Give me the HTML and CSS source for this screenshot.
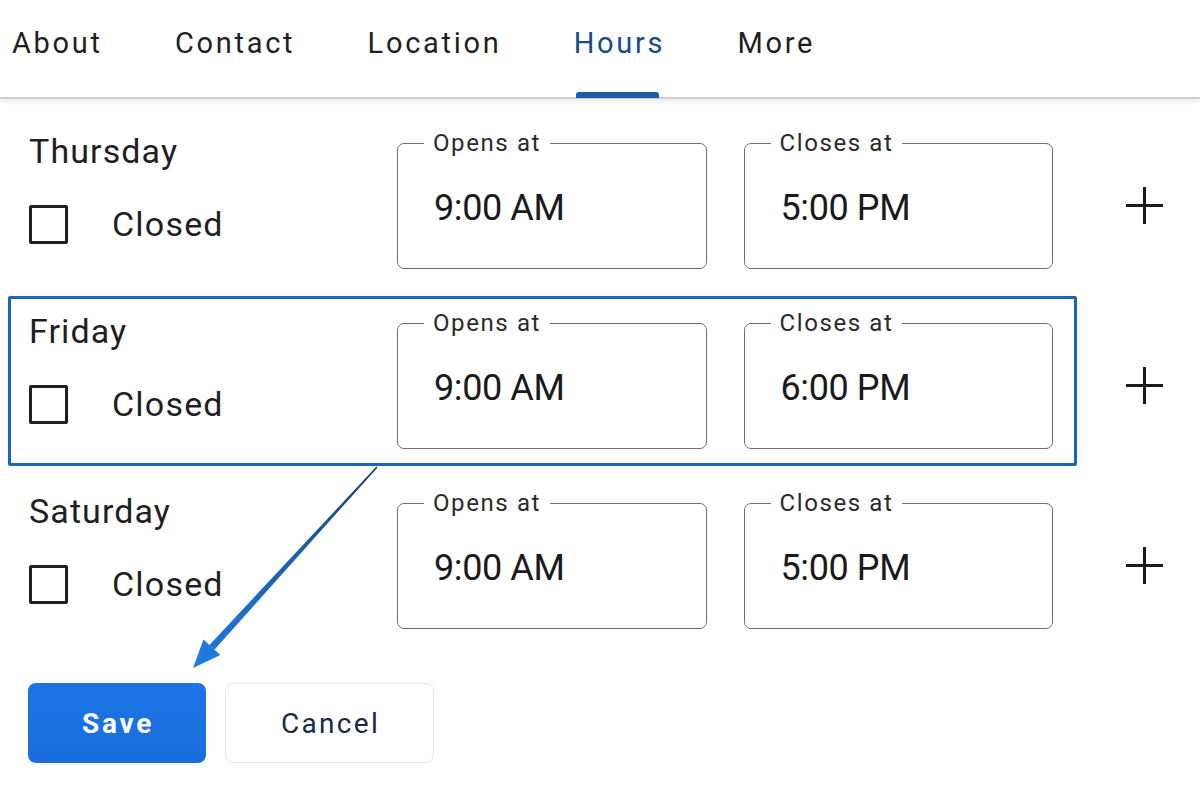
FILE: index.html
```html
<!DOCTYPE html>
<html lang="en">
<head>
<meta charset="utf-8">
<title>Hours</title>
<link rel="stylesheet" href="styles.css">
</head>
<body>
<div class="page">
  <nav class="tabs">
    <a class="tab">About</a>
    <a class="tab">Contact</a>
    <a class="tab">Location</a>
    <a class="tab active">Hours</a>
    <a class="tab">More</a>
  </nav>

  <div class="days">
    <div class="day-row">
      <div class="day-box">
        <div class="day-left">
          <div class="day-name">Thursday</div>
          <label class="closed"><span class="checkbox"></span><span class="closed-text">Closed</span></label>
        </div>
        <fieldset class="time-field"><legend>Opens at</legend><div class="time-value">9:00 AM</div></fieldset>
        <fieldset class="time-field"><legend>Closes at</legend><div class="time-value">5:00 PM</div></fieldset>
      </div>
      <span class="add"></span>
    </div>

    <div class="day-row">
      <div class="day-box highlighted">
        <div class="day-left">
          <div class="day-name">Friday</div>
          <label class="closed"><span class="checkbox"></span><span class="closed-text">Closed</span></label>
        </div>
        <fieldset class="time-field"><legend>Opens at</legend><div class="time-value">9:00 AM</div></fieldset>
        <fieldset class="time-field"><legend>Closes at</legend><div class="time-value">6:00 PM</div></fieldset>
      </div>
      <span class="add"></span>
    </div>

    <div class="day-row">
      <div class="day-box">
        <div class="day-left">
          <div class="day-name">Saturday</div>
          <label class="closed"><span class="checkbox"></span><span class="closed-text">Closed</span></label>
        </div>
        <fieldset class="time-field"><legend>Opens at</legend><div class="time-value">9:00 AM</div></fieldset>
        <fieldset class="time-field"><legend>Closes at</legend><div class="time-value">5:00 PM</div></fieldset>
      </div>
      <span class="add"></span>
    </div>
  </div>

  <div class="actions">
    <button class="btn btn-save">Save</button>
    <button class="btn btn-cancel">Cancel</button>
  </div>

  <svg class="arrow" width="1200" height="800" viewBox="0 0 1200 800">
    <defs>
      <linearGradient id="ag" x1="377" y1="467" x2="193" y2="668" gradientUnits="userSpaceOnUse">
        <stop offset="0" stop-color="#1b3f6e"/>
        <stop offset="0.45" stop-color="#1d5fae"/>
        <stop offset="1" stop-color="#1f7ae0"/>
      </linearGradient>
    </defs>
    <polygon points="377.6,467.4 376.4,466.6 209.4,644.9 214.4,649.7" fill="url(#ag)"/>
    <polygon points="193,668 203.5,639.6 220.3,655" fill="#1f7ae0"/>
  </svg>
</div>
</body>
</html>
```

FILE: styles.css
```css
* { box-sizing: border-box; }

html, body {
  margin: 0;
  padding: 0;
  background: #ffffff;
}

body {
  font-family: Roboto, "Noto Sans", "Liberation Sans", sans-serif;
  color: #1f1f1f;
  width: 1200px;
  height: 800px;
  overflow: hidden;
}

.page {
  position: relative;
  width: 1200px;
  height: 800px;
}

/* Tabs */
.tabs {
  display: flex;
  gap: 72.3px;
  padding-left: 12px;
  height: 99px;
  border-bottom: 2px solid #cfcfcf;
  box-shadow: 0 3px 5px rgba(0, 0, 0, 0.08);
}

.tab {
  position: relative;
  padding-top: 26px;
  font-size: 29px;
  line-height: 34px;
  letter-spacing: 2.7px;
  color: #1f1f1f;
}

.tab.active {
  color: #174c8c;
}

.tab.active::after {
  content: "";
  position: absolute;
  left: 2px;
  right: 6px;
  bottom: -1px;
  height: 6px;
  background: #1b5aa6;
  border-radius: 3px 3px 0 0;
}

/* Day rows */
.days {
  display: flex;
  flex-direction: column;
  gap: 10px;
  padding: 17px 0 0 8px;
}

.day-row {
  display: flex;
  align-items: center;
}

.day-box {
  display: flex;
  align-items: flex-start;
  width: 1069px;
  height: 170px;
  padding: 10px 21px 15px 18px;
  border: 3px solid transparent;
  border-radius: 2px;
}

.day-box.highlighted {
  border-color: #1c64b9;
}

.day-left {
  width: 368px;
  flex: none;
  padding-top: 2px;
}

.day-name {
  font-size: 34px;
  line-height: 40px;
  letter-spacing: 1.1px;
}

.closed {
  display: flex;
  align-items: center;
  margin-top: 33px;
  height: 40px;
}

.checkbox {
  width: 39px;
  height: 39px;
  border: 3px solid #1f1f1f;
  border-radius: 2px;
  flex: none;
}

.closed-text {
  margin-left: 44px;
  font-size: 34px;
  line-height: 40px;
  letter-spacing: 1.2px;
}

.time-field {
  margin: 0;
  width: 310px;
  min-width: 0;
  height: 140px;
  padding: 30px 0 0 36px;
  border: 1.5px solid #6f6f6f;
  border-radius: 7px;
}

.time-field + .time-field {
  margin-left: 37px;
}

.time-field legend {
  margin-left: -10px;
  padding: 0 9px;
  font-size: 24px;
  line-height: 28px;
  color: #2a2a2a;
  letter-spacing: 1.6px;
}

.time-value {
  font-size: 36px;
  line-height: 42px;
  color: #1a1a1a;
  letter-spacing: -0.4px;
}

.add {
  position: relative;
  flex: none;
  width: 37px;
  height: 37px;
  margin-left: 49px;
  margin-top: 8px;
}

.add::before,
.add::after {
  content: "";
  position: absolute;
  background: #1a1a1a;
}

.add::before {
  left: 0;
  right: 0;
  top: 17px;
  height: 3px;
}

.add::after {
  top: 0;
  bottom: 0;
  left: 17px;
  width: 3px;
}

/* Actions */
.actions {
  display: flex;
  gap: 19px;
  padding: 37px 0 0 28px;
}

.btn {
  height: 80px;
  border-radius: 8px;
  font-family: Roboto, "Noto Sans", "Liberation Sans", sans-serif;
  font-size: 28px;
  cursor: pointer;
}

.btn-save {
  width: 178px;
  border: none;
  background: linear-gradient(180deg, #1d74e6 0%, #1a6ddc 100%);
  color: #ffffff;
  font-weight: 700;
  letter-spacing: 2.7px;
  padding-left: 8px;
}

.btn-cancel {
  width: 209px;
  background: #ffffff;
  border: 1.5px solid #e6e6e6;
  color: #172b49;
  font-weight: 400;
  letter-spacing: 2.3px;
  padding-left: 8px;
}

/* Annotation arrow */
.arrow {
  position: absolute;
  left: 0;
  top: 0;
  pointer-events: none;
}
```
